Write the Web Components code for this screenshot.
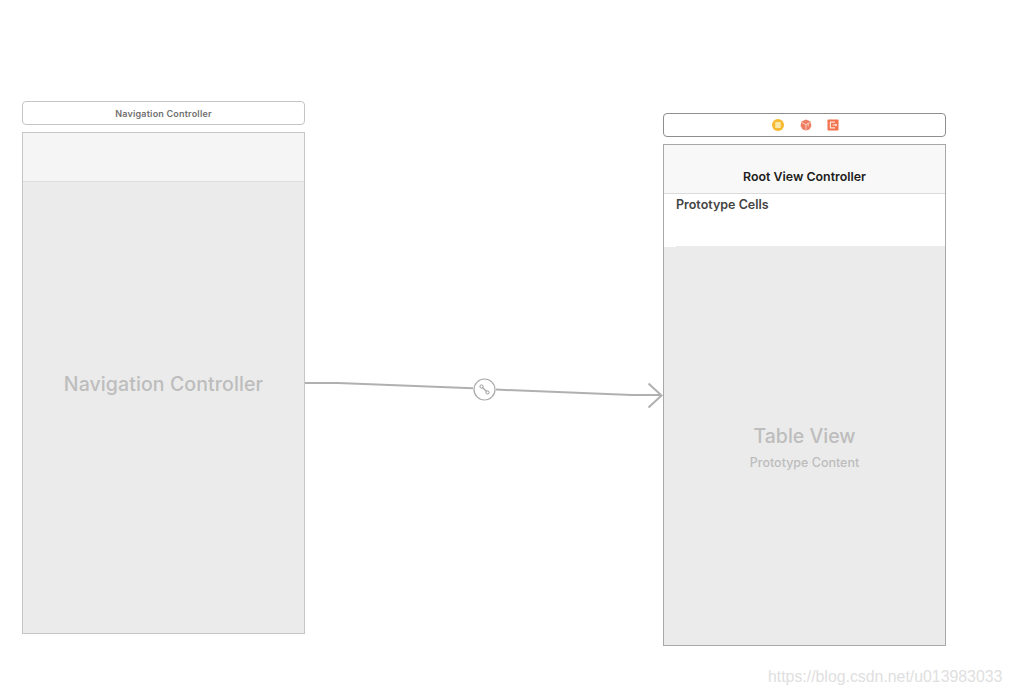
<!DOCTYPE html>
<html>
<head>
<meta charset="utf-8">
<title>Storyboard</title>
<style>
    html, body {
        margin: 0;
        height: 100%;
        background: #fff;
        font-family: "Inter", "Liberation Sans", sans-serif;
    }
</style>
</head>
<body>
<story-board>
    <story-scene style="left:22px;top:101px" title-text="Navigation Controller" kind="nav">
        <scene-placeholder style="padding-bottom:47px;letter-spacing:.1px" main="Navigation Controller"></scene-placeholder>
    </story-scene>
    <story-segue></story-segue>
    <story-scene style="left:663px;top:113px" nav-title="Root View Controller" dark>
        <scene-icons slot="dock"></scene-icons>
        <prototype-cells>Prototype Cells</prototype-cells>
        <scene-placeholder style="padding-top:3px" main="Table View" sub="Prototype Content"></scene-placeholder>
    </story-scene>
    <span class="mark" slot="mark">https://blog.csdn.net/u013983033</span>
</story-board>

<script>
class StoryBoard extends HTMLElement {
    constructor() {
        super();
        const shadow = this.attachShadow({ mode: 'open' });
        shadow.innerHTML = `
            <style>
                :host {
                    display: block;
                    position: relative;
                    width: 1011px;
                    height: 695px;
                    overflow: hidden;
                }
                .mark {
                    position: absolute;
                    left: 768px;
                    top: 667px;
                    font: 15.85px/20px "Liberation Sans", sans-serif;
                    color: #e0e0e0;
                    white-space: nowrap;
                }
            </style>
            <slot></slot>
            <div class="mark"><slot name="mark"></slot></div>
        `;
    }
}

class StoryScene extends HTMLElement {
    constructor() {
        super();
        const shadow = this.attachShadow({ mode: 'open' });
        const dark = this.hasAttribute('dark');
        const titleText = this.getAttribute('title-text') || '';
        const navTitle = this.getAttribute('nav-title') || '';
        const edge = dark ? '#8e8e8e' : '#c4c4c4';
        shadow.innerHTML = `
            <style>
                :host {
                    position: absolute;
                    display: flex;
                    flex-direction: column;
                    gap: 7px;
                    width: 283px;
                    height: 533px;
                }
                .dock {
                    box-sizing: border-box;
                    height: 24px;
                    flex: none;
                    display: flex;
                    align-items: center;
                    justify-content: center;
                    background: #fff;
                    border: 1px solid ${edge};
                    border-radius: 4px;
                    font-size: 9px;
                    letter-spacing: .2px;
                    font-weight: 600;
                    color: #707070;
                }
                .body {
                    box-sizing: border-box;
                    flex: 1;
                    min-height: 0;
                    display: flex;
                    flex-direction: column;
                    border: 1px solid ${dark ? '#a8a8a8' : '#c6c6c6'};
                    background: #ebebeb;
                }
                .nav {
                    box-sizing: border-box;
                    flex: none;
                    height: 49px;
                    background: ${dark ? '#f8f8f8' : '#f5f5f5'};
                    border-bottom: 1px solid #dcdcdc;
                    display: flex;
                    align-items: flex-end;
                    justify-content: center;
                    padding-bottom: 8px;
                    font-size: 12.4px;
                    line-height: 16px;
                    font-weight: 600;
                    color: #1d1d1d;
                }
                .content {
                    flex: 1;
                    min-height: 0;
                    display: flex;
                    flex-direction: column;
                }
            </style>
            <div class="dock"><slot name="dock">${titleText}</slot></div>
            <div class="body">
                <div class="nav">${navTitle}</div>
                <div class="content"><slot></slot></div>
            </div>
        `;
    }
}

class SceneIcons extends HTMLElement {
    constructor() {
        super();
        const shadow = this.attachShadow({ mode: 'open' });
        shadow.innerHTML = `
            <style>
                :host {
                    display: flex;
                    align-items: center;
                    gap: 15.5px;
                    padding-left: 2px;
                }
                svg { display: block; width: 12px; height: 12px; }
            </style>
            <svg viewBox="0 0 12 12">
                <circle cx="6" cy="6" r="6" fill="#f6b92f"/>
                <rect x="3.2" y="3" width="5.6" height="6" rx=".6" fill="#f8e7a6"/>
            </svg>
            <svg viewBox="0 0 12 12">
                <path d="M6 .6 10.600 2.400 11.400 7 9.400 10.400 6 11.600 2.600 10.400.6 7 1.400 2.400z" fill="#ef7d62"/>
                <path d="M1.200 3.200 6 5.600l4.800-2.400M6 5.600v5.800M8.200 4.200v3" fill="none" stroke="#fbd3c6" stroke-width=".9"/>
            </svg>
            <svg viewBox="0 0 12 12">
                <rect x=".5" y=".5" width="11" height="11" rx=".8" fill="#f2734e"/>
                <path d="M8 3.2H3.4v5.600H8" fill="none" stroke="#fde3d8" stroke-width="1.2"/>
                <path d="M5.600 6h4.200" stroke="#fde3d8" stroke-width="1.2"/>
                <path d="M8.400 4.400 10.400 6 8.400 7.600z" fill="#fde3d8"/>
            </svg>
        `;
    }
}

class PrototypeCells extends HTMLElement {
    constructor() {
        super();
        const shadow = this.attachShadow({ mode: 'open' });
        shadow.innerHTML = `
            <style>
                :host {
                    display: block;
                    box-sizing: border-box;
                    flex: none;
                    height: 53px;
                    padding: 3px 0 0 12px;
                    background: linear-gradient(#ebebeb, #ebebeb) 12px 100% / 100% 1px no-repeat #fff;
                    font-size: 12.5px;
                    line-height: 16px;
                    font-weight: 600;
                    color: #444;
                }
            </style>
            <slot></slot>
        `;
    }
}

class ScenePlaceholder extends HTMLElement {
    constructor() {
        super();
        const shadow = this.attachShadow({ mode: 'open' });
        const sub = this.getAttribute('sub');
        shadow.innerHTML = `
            <style>
                :host {
                    flex: 1;
                    display: flex;
                    flex-direction: column;
                    align-items: center;
                    justify-content: center;
                    gap: 7px;
                    color: #bdbdbd;
                }
                .main { font-size: 19.5px; line-height: 24px; font-weight: 500; }
                .sub { font-size: 12.5px; line-height: 16px; font-weight: 500; }
            </style>
            <div class="main">${this.getAttribute('main')}</div>
            ${sub ? `<div class="sub">${sub}</div>` : ''}
        `;
    }
}

class StorySegue extends HTMLElement {
    constructor() {
        super();
        const shadow = this.attachShadow({ mode: 'open' });
        shadow.innerHTML = `
            <style>
                :host {
                    position: absolute;
                    left: 300px;
                    top: 370px;
                    width: 370px;
                    height: 40px;
                }
                svg { display: block; }
            </style>
            <svg width="370" height="40" viewBox="300 370 370 40" fill="none" stroke="#b0b0b0">
                <path d="M305 383H338L473 388.300M496 389.600 632 395H660" stroke-width="2"/>
                <path d="M648.500 383.500 661.500 395.500 648.500 407.500" stroke-width="2"/>
                <circle cx="484.500" cy="389.500" r="10.500" fill="#fff" stroke="#aaa" stroke-width="1.200"/>
                <path d="M482.500 387.500 486.500 391.500" stroke="#aaa" stroke-width="1.400"/>
                <circle cx="481.500" cy="386.500" r="1.600" fill="#fff" stroke="#999"/>
                <circle cx="487.500" cy="392.500" r="1.600" fill="#fff" stroke="#999"/>
            </svg>
        `;
    }
}

customElements.define('story-board', StoryBoard);
customElements.define('story-scene', StoryScene);
customElements.define('scene-icons', SceneIcons);
customElements.define('prototype-cells', PrototypeCells);
customElements.define('scene-placeholder', ScenePlaceholder);
customElements.define('story-segue', StorySegue);
</script>
</body>
</html>
